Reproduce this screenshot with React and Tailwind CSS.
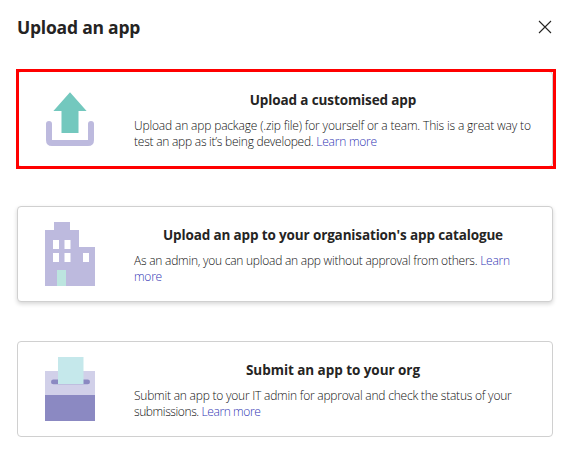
function UploadIcon() {
  return (
    <svg width="50" height="64" viewBox="0 0 50 64" className="shrink-0">
      <path d="M4 37v16q0 3 3 3h36q3 0 3-3V37" fill="none" stroke="#bdbade" strokeWidth="6" strokeLinecap="round" />
      <path d="M25 5.3L41.6 24H33.5V46H16.5V24H8.4Z" fill="#73c8be" />
    </svg>
  );
}

function BuildingIcon() {
  return (
    <svg width="50" height="64" viewBox="0 0 50 64" className="shrink-0">
      <path d="M9 0H25V8H34V25H50V64H0V8H9Z" fill="#bdbade" />
      <path d="M8 18h6v9H8zM19.5 18h6v9h-6zM8 31h6v9H8zM19.5 31h6v9h-6zM38 31h6v9h-6z" fill="#fff" />
      <path d="M12 48h9v16h-9z" fill="#bce5df" />
    </svg>
  );
}

function BallotIcon() {
  return (
    <svg width="50" height="64" viewBox="0 0 50 64" className="shrink-0">
      <path d="M0 14H50V38H0Z" fill="#d1d0e9" />
      <path d="M0 38H50V64H0Z" fill="#8b89c2" />
      <rect x="6" y="22.5" width="39" height="4.8" rx="2.4" fill="#8b89c2" />
      <path d="M13 0H38.5V27H13Z" fill="#c5e8eb" />
    </svg>
  );
}

function Link({ children }) {
  return <a className="text-[#3236b4]">{children}</a>;
}

function Card({ icon, title, titleClass, className = "", children }) {
  return (
    <section className={`relative flex h-24 w-[536px] items-center rounded border border-[#d0d0d0] bg-white pl-[27px] ${className}`}>
      {icon}
      <div className="ml-[39px] h-full w-[398px] pt-[18px]">
        <h2 className={`flex h-5 items-center justify-center whitespace-nowrap text-[13.5px] font-bold ${titleClass}`}>{title}</h2>
        <div className="mt-2 text-[12px] font-light leading-4 text-[#111111]">{children}</div>
      </div>
    </section>
  );
}

function Line({ className = "", children }) {
  return (
    <p className="whitespace-nowrap">
      <span className={className}>{children}</span>
    </p>
  );
}

export default function App() {
  return (
    <main className="h-[457px] w-[569px] overflow-hidden bg-white pl-[17px] font-['Segoe_UI','Open_Sans',sans-serif] text-[#252423]">
      <header className="flex h-[71px] items-start justify-between pr-[17px] pt-[15px]">
        <h1 className="whitespace-nowrap text-[17.5px] font-bold leading-6 tracking-[-0.22px]">Upload an app</h1>
        <svg width="14" height="14" viewBox="0 0 14 14" className="mt-[5px]" aria-label="Close">
          <path d="M1 1L13 13M13 1L1 13" stroke="#252423" strokeWidth="1.1" />
        </svg>
      </header>
      <div className="flex flex-col gap-[39px]">
        <Card icon={<UploadIcon />} title="Upload a customised app" titleClass="tracking-[-0.12px]">
          <Line className="tracking-[-0.165px]">Upload an app package (.zip file) for yourself or a team. This is a great way to</Line>
          <Line className="tracking-[-0.24px]">test an app as it’s being developed. <Link>Learn more</Link></Line>
          <div className="absolute -left-0.5 -top-[3px] h-[100px] w-[540px] border-[3px] border-[#ff0000]" />
        </Card>
        <Card icon={<BuildingIcon />} title="Upload an app to your organisation's app catalogue" titleClass="tracking-[-0.14px]" className="shadow-[0_2px_4px_rgba(0,0,0,0.16)]">
          <Line className="tracking-[-0.24px]">As an admin, you can upload an app without approval from others. <Link>Learn</Link></Line>
          <Line className="tracking-[-0.24px]"><Link>more</Link></Line>
        </Card>
        <Card icon={<BallotIcon />} title="Submit an app to your org" titleClass="tracking-[-0.05px]">
          <Line className="tracking-[-0.22px]">Submit an app to your IT admin for approval and check the status of your</Line>
          <Line className="tracking-[-0.4px]">submissions. <Link>Learn more</Link></Line>
        </Card>
      </div>
    </main>
  );
}
